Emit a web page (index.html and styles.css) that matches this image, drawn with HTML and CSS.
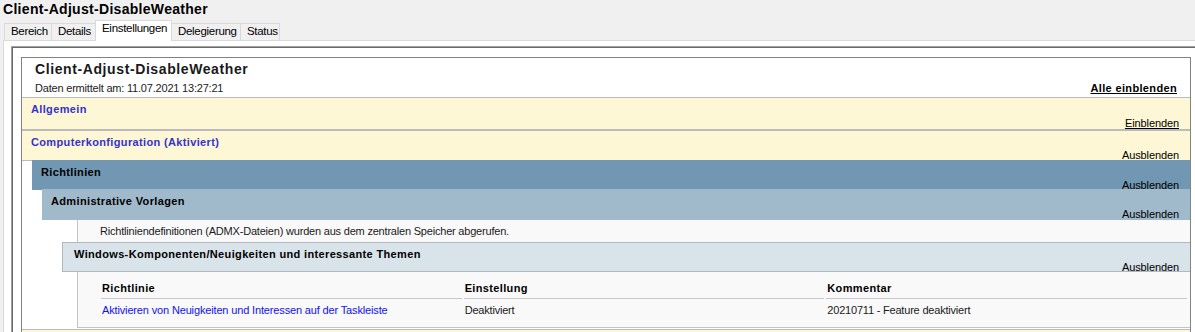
FILE: index.html
```html
<!DOCTYPE html>
<html lang="de">
<head>
<meta charset="utf-8">
<title>Client-Adjust-DisableWeather</title>
<link rel="stylesheet" href="styles.css">
</head>
<body>
<div class="window">
  <h1 class="win-title">Client-Adjust-DisableWeather</h1>
  <div class="tabs">
    <div class="tab t-bereich">Bereich</div>
    <div class="tab t-details">Details</div>
    <div class="tab active t-einst">Einstellungen</div>
    <div class="tab t-deleg">Delegierung</div>
    <div class="tab t-status">Status</div>
  </div>
  <div class="panel">
    <div class="frame">
      <div class="report">
        <div class="rep-head">
          <div class="rep-title">Client-Adjust-DisableWeather</div>
          <div class="rep-meta">
            <span class="meta-text">Daten ermittelt am: 11.07.2021 13:27:21</span>
            <a class="showall">Alle einblenden</a>
          </div>
        </div>

        <div class="he0 collapsed">
          <span class="he-title">Allgemein</span>
          <a class="expando link">Einblenden</a>
        </div>

        <div class="he0 expanded">
          <span class="he-title">Computerkonfiguration (Aktiviert)</span>
          <a class="expando">Ausblenden</a>
        </div>
        <div class="container">
          <div class="he1h">
            <span class="he-title">Richtlinien</span>
            <a class="expando">Ausblenden</a>
          </div>
          <div class="container">
            <div class="he1">
              <span class="he-title">Administrative Vorlagen</span>
              <a class="expando">Ausblenden</a>
            </div>
            <div class="container">
              <div class="info">Richtliniendefinitionen (ADMX-Dateien) wurden aus dem zentralen Speicher abgerufen.</div>
              <div class="he3">
                <span class="he-title">Windows-Komponenten/Neuigkeiten und interessante Themen</span>
                <a class="expando">Ausblenden</a>
              </div>
              <div class="settings">
                <table class="policy-table">
                  <thead>
                    <tr><th>Richtlinie</th><th>Einstellung</th><th>Kommentar</th></tr>
                  </thead>
                  <tbody>
                    <tr>
                      <td><a class="policy-link">Aktivieren von Neuigkeiten und Interessen auf der Taskleiste</a></td>
                      <td>Deaktiviert</td>
                      <td>20210711 - Feature deaktiviert</td>
                    </tr>
                  </tbody>
                </table>
              </div>
            </div>
          </div>
        </div>
        <div class="filler"></div>

        <div class="he0 next"></div>
      </div>
    </div>
  </div>
</div>
</body>
</html>
```

FILE: styles.css
```css
html, body {
  margin: 0;
  padding: 0;
  height: 332px;
  overflow: hidden;
}

body {
  background: #f0f0f0;
  font-family: "Liberation Sans", Arial, sans-serif;
  color: #000;
}

.window {
  width: 1195px;
}

.win-title {
  margin: 0;
  height: 19px;
  padding-left: 3px;
  font-size: 14px;
  line-height: 19px;
  font-weight: bold;
  letter-spacing: 0.3px;
}

/* Tabs */
.tabs {
  display: flex;
  align-items: flex-end;
  height: 21px;
  padding-left: 4px;
}

.tab {
  box-sizing: border-box;
  height: 17px;
  border-top: 1px solid #d9d9d9;
  border-left: 1px solid #d9d9d9;
  background: #f0f0f0;
  font-size: 11.5px;
  line-height: 14px;
  letter-spacing: -0.3px;
  padding-left: 6px;
  white-space: nowrap;
  color: #000;
}

.t-bereich { width: 47px; }
.t-details { width: 44px; }
.t-deleg { width: 68px; border-left: none; }
.t-status { width: 40px; border-right: 1px solid #d9d9d9; }

.tab.active {
  width: 77px;
  height: 21px;
  margin-bottom: -1px;
  background: #fff;
  border-right: 1px solid #d9d9d9;
  line-height: 15px;
  position: relative;
  z-index: 1;
}

/* Tab panel */
.panel {
  margin-left: 3px;
  border-top: 1px solid #d9d9d9;
  border-left: 1px solid #d9d9d9;
  background: #fff;
  padding: 5px 0 0 7px;
  height: 400px;
}

.frame {
  border-top: 1px solid #a0a0a0;
  border-left: 1px solid #a0a0a0;
  box-shadow: inset 1px 1px 0 #696969;
  background: #fff;
  padding: 10px 0 0 9px;
  height: 400px;
}

.report {
  box-sizing: border-box;
  width: 1170px;
  border: 1px solid #828282;
  background: #fff;
  font-size: 11px;
  letter-spacing: -0.2px;
}

.rep-head {
  height: 39px;
  box-sizing: border-box;
  padding: 3px 13px 0 13px;
}

.rep-title {
  font-size: 14px;
  line-height: 17px;
  font-weight: bold;
  letter-spacing: 0.6px;
  color: #1a1a1a;
}

.rep-meta {
  margin-top: 4px;
  display: flex;
  justify-content: space-between;
  line-height: 13px;
}

.meta-text {
  color: #222;
}

.showall {
  font-weight: bold;
  letter-spacing: 0.35px;
  text-decoration: underline;
  color: #000;
}

/* Section headers */
.he0, .he1h, .he1, .he3 {
  box-sizing: border-box;
  display: flex;
  flex-direction: column;
  font-weight: bold;
  font-size: 11px;
  padding: 5px 11px 0 9px;
}

.he-title {
  line-height: 13px;
  letter-spacing: 0.35px;
}

.expando {
  margin-top: auto;
  align-self: flex-end;
  font-weight: normal;
  color: #000;
  line-height: 12px;
  letter-spacing: -0.1px;
}

.expando.link {
  text-decoration: underline;
}

.he0 {
  height: 31px;
  background: #fef7d6;
  border-top: 1px solid #bbbbbb;
  border-bottom: 1px solid #bbbbbb;
  color: #3333cc;
}

.he0.collapsed {
  height: 33px;
}

.he0.expanded {
  margin-bottom: -1px;
}

.filler {
  height: 1px;
}

.he1h {
  height: 30px;
  margin: 0 0 -1px 10px;
  background: #7197b3;
  border-top: 1px solid #7197b3;
  border-bottom: 1px solid #7197b3;
}

.he1 {
  height: 31px;
  margin: 0 0 0 20px;
  background: #a0bacb;
  border-top: 1px solid #a0bacb;
  border-bottom: 1px solid #a0bacb;
}

.info {
  box-sizing: border-box;
  height: 22px;
  margin-left: 55px;
  border-left: 1px solid #c4c4c4;
  background: #f9f9f9;
  padding: 4px 0 0 22px;
  line-height: 15px;
  color: #1a1a1a;
}

.he3 {
  height: 30px;
  margin: 0 0 0 40px;
  background: #d9e3ea;
  border: 1px solid #b0b8be;
  border-right: none;
  padding-left: 11px;
  color: #000;
}

.settings {
  box-sizing: border-box;
  height: 56px;
  margin-left: 55px;
  border-left: 1px solid #c4c4c4;
  border-bottom: 1px solid #c4c4c4;
  background: #f9f9f9;
  padding: 2px 0 0 21px;
}

.policy-table {
  width: 1090px;
  table-layout: fixed;
  border-spacing: 2px;
  font-size: 11px;
}

.policy-table th {
  text-align: left;
  font-weight: bold;
  letter-spacing: 0.35px;
  padding: 6px 0 3px 1px;
  line-height: 13px;
  border-bottom: 1px solid #c8c8c8;
}

.policy-table td {
  padding: 3px 0 3px 1px;
  line-height: 13px;
  color: #1a1a1a;
}

.policy-link {
  color: #1010f0;
  letter-spacing: -0.15px;
}
```
